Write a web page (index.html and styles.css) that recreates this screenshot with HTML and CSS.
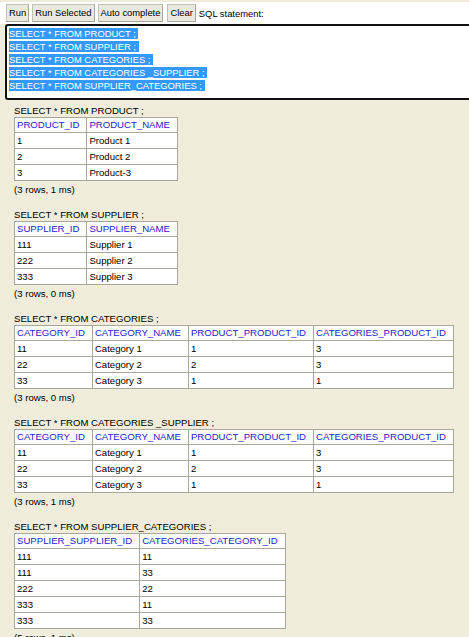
FILE: index.html
```html
<!DOCTYPE html>
<html>
<head>
<meta charset="utf-8">
<title>H2 Console</title>
<link rel="stylesheet" href="styles.css">
</head>
<body>
<div class="toolbar">
  <button class="btn">Run</button>
  <button class="btn">Run Selected</button>
  <button class="btn">Auto complete</button>
  <button class="btn btn-clear">Clear</button>
  <span class="label">SQL statement:</span>
</div>
<div class="editor">
<div class="line"><span class="sel">SELECT * FROM PRODUCT ; </span></div>
<div class="line"><span class="sel">SELECT * FROM SUPPLIER ; </span></div>
<div class="line"><span class="sel">SELECT * FROM CATEGORIES ; </span></div>
<div class="line"><span class="sel">SELECT * FROM CATEGORIES _SUPPLIER ; </span></div>
<div class="line"><span class="sel">SELECT * FROM SUPPLIER_CATEGORIES ; </span></div>
</div>
<div class="results">
  <div class="block">
    <div class="query">SELECT * FROM PRODUCT ;</div>
    <table class="grid">
      <tr><th>PRODUCT_ID</th><th>PRODUCT_NAME</th></tr>
      <tr><td>1</td><td>Product 1</td></tr>
      <tr><td>2</td><td>Product 2</td></tr>
      <tr><td>3</td><td>Product-3</td></tr>
    </table>
    <div class="info">(3 rows, 1 ms)</div>
  </div>
  <div class="block">
    <div class="query">SELECT * FROM SUPPLIER ;</div>
    <table class="grid">
      <tr><th>SUPPLIER_ID</th><th>SUPPLIER_NAME</th></tr>
      <tr><td>111</td><td>Supplier 1</td></tr>
      <tr><td>222</td><td>Supplier 2</td></tr>
      <tr><td>333</td><td>Supplier 3</td></tr>
    </table>
    <div class="info">(3 rows, 0 ms)</div>
  </div>
  <div class="block">
    <div class="query">SELECT * FROM CATEGORIES ;</div>
    <table class="grid">
      <tr><th>CATEGORY_ID</th><th>CATEGORY_NAME</th><th>PRODUCT_PRODUCT_ID</th><th>CATEGORIES_PRODUCT_ID</th></tr>
      <tr><td>11</td><td>Category 1</td><td>1</td><td>3</td></tr>
      <tr><td>22</td><td>Category 2</td><td>2</td><td>3</td></tr>
      <tr><td>33</td><td>Category 3</td><td>1</td><td>1</td></tr>
    </table>
    <div class="info">(3 rows, 0 ms)</div>
  </div>
  <div class="block">
    <div class="query">SELECT * FROM CATEGORIES _SUPPLIER ;</div>
    <table class="grid">
      <tr><th>CATEGORY_ID</th><th>CATEGORY_NAME</th><th>PRODUCT_PRODUCT_ID</th><th>CATEGORIES_PRODUCT_ID</th></tr>
      <tr><td>11</td><td>Category 1</td><td>1</td><td>3</td></tr>
      <tr><td>22</td><td>Category 2</td><td>2</td><td>3</td></tr>
      <tr><td>33</td><td>Category 3</td><td>1</td><td>1</td></tr>
    </table>
    <div class="info">(3 rows, 1 ms)</div>
  </div>
  <div class="block">
    <div class="query">SELECT * FROM SUPPLIER_CATEGORIES ;</div>
    <table class="grid">
      <tr><th>SUPPLIER_SUPPLIER_ID</th><th>CATEGORIES_CATEGORY_ID</th></tr>
      <tr><td>111</td><td>11</td></tr>
      <tr><td>111</td><td>33</td></tr>
      <tr><td>222</td><td>22</td></tr>
      <tr><td>333</td><td>11</td></tr>
      <tr><td>333</td><td>33</td></tr>
    </table>
    <div class="info">(5 rows, 1 ms)</div>
  </div>
</div>
</body>
</html>
```
FILE: styles.css
```css
html, body {
  overflow: hidden;
}
body {
  margin: 0;
  background: #efecdc;
  font-family: "Liberation Sans", Arial, sans-serif;
  font-size: 9.6px;
  color: #000;
}
.toolbar {
  margin-top: 2px;
  height: 22px;
  background: #fff;
  display: flex;
  align-items: center;
  padding-left: 6px;
  gap: 3px;
}
.btn {
  font-family: "Liberation Sans", Arial, sans-serif;
  font-size: 9.4px;
  color: #000;
  height: 18px;
  margin: 0;
  padding: 0 2px;
  background: #ebe9df;
  border: 1px solid #c4c1b4;
  border-right-color: #a9a698;
  border-bottom-color: #a9a698;
  border-radius: 0;
  line-height: 16px;
}
.btn-clear {
  margin-left: 1px;
}
.label {
  font-size: 9.4px;
}
.editor {
  box-sizing: border-box;
  margin-left: 5px;
  height: 76px;
  background: #fff;
  border: 2px solid #111;
  border-right: none;
  border-radius: 3px 0 0 3px;
  padding: 1px 0 0 2px;
  font-size: 9.4px;
  overflow: hidden;
}
.line {
  line-height: 13px;
  white-space: pre;
}
.sel {
  background: #3399ff;
  color: #fff;
}
.results {
  padding-left: 14px;
  margin-top: 5px;
}
.block {
  margin-bottom: 13px;
}
.query {
  line-height: 12px;
  white-space: pre;
}
.info {
  line-height: 12px;
  margin-top: 3px;
}
.grid {
  border-collapse: collapse;
  border: 1px solid #aca899;
  background: #fff;
}
.grid th, .grid td {
  border: 1px solid #aca899;
  padding: 0 7px 0 2px;
  text-align: left;
  white-space: nowrap;
  font-weight: normal;
}
.grid th {
  color: #2626cc;
  line-height: 14px;
  background: #fcfcf8;
}
.grid td {
  line-height: 15px;
}
```
